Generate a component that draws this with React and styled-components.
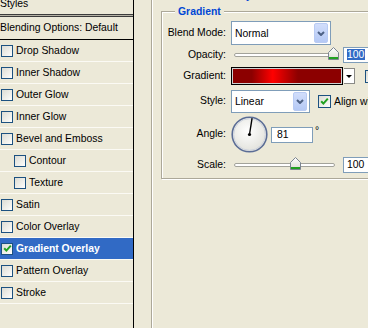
import React from "react";
import styled, { createGlobalStyle } from "styled-components";

const GlobalStyle = createGlobalStyle`
  html, body {
    margin: 0;
    padding: 0;
    background: #ece9d8;
  }
  body {
    font-family: "Liberation Sans", Arial, sans-serif;
    font-size: 10.4px;
    color: #000;
  }
`;

const effects = [
  { name: "Drop Shadow" },
  { name: "Inner Shadow" },
  { name: "Outer Glow" },
  { name: "Inner Glow" },
  { name: "Bevel and Emboss" },
  { name: "Contour", sub: true },
  { name: "Texture", sub: true },
  { name: "Satin" },
  { name: "Color Overlay" },
  { name: "Gradient Overlay", checked: true, selected: true },
  { name: "Pattern Overlay" },
  { name: "Stroke" },
];

function Check({ checked, size = 12 }) {
  return (
    <CheckBox $size={size}>
      {checked && (
        <svg width="9" height="9" viewBox="0 0 9 9">
          <path d="M1.2 4.2 L3.4 6.6 L7.8 1.6" fill="none" stroke="#21a121" strokeWidth="2" />
        </svg>
      )}
    </CheckBox>
  );
}

function Combo({ value, width, height }) {
  return (
    <ComboBox $w={width} $h={height}>
      <span>{value}</span>
      <ComboButton>
        <svg width="8" height="5" viewBox="0 0 8 5">
          <polyline points="1,1 4,4 7,1" fill="none" stroke="#4d6185" strokeWidth="2" />
        </svg>
      </ComboButton>
    </ComboBox>
  );
}

function Slider({ pct }) {
  return (
    <SliderWrap>
      <Track>
        <Thumb style={{ left: `calc(${pct}% - 6px)` }}>
          <svg width="11" height="13" viewBox="0 0 11 13">
            <defs>
              <linearGradient id="tg" x1="0" y1="0" x2="0" y2="1">
                <stop offset="0" stopColor="#ffffff" />
                <stop offset="1" stopColor="#dcdcd4" />
              </linearGradient>
            </defs>
            <path d="M0.5 5.5 L5.5 0.5 L10.5 5.5 L10.5 12.5 L0.5 12.5 Z" fill="url(#tg)" stroke="#7b8591" />
            <rect x="1" y="10" width="9" height="2" fill="#21a121" />
          </svg>
        </Thumb>
      </Track>
    </SliderWrap>
  );
}

function Dial({ angle }) {
  const r = (angle * Math.PI) / 180;
  const x2 = 18.5 + Math.cos(r) * 16.5;
  const y2 = 18.5 - Math.sin(r) * 16.5;
  return (
    <svg width="37" height="37" viewBox="0 0 37 37">
      <defs>
        <radialGradient id="dg" cx="0.45" cy="0.4" r="0.6">
          <stop offset="0" stopColor="#ffffff" />
          <stop offset="1" stopColor="#e2e2dc" />
        </radialGradient>
      </defs>
      <circle cx="18.5" cy="18.5" r="17.3" fill="url(#dg)" stroke="#5b6d96" strokeWidth="1.6" />
      <circle cx="18.5" cy="18.5" r="15.8" fill="none" stroke="#c9cfdc" strokeWidth="0.8" />
      <line x1="18.5" y1="18.5" x2={x2} y2={y2} stroke="#000" strokeWidth="1.4" />
      <circle cx="18.5" cy="18.5" r="1.6" fill="#000" />
    </svg>
  );
}

export default function App() {
  return (
    <>
      <GlobalStyle />
      <Window>
        <StylesPanel>
          <PanelTitle>Styles</PanelTitle>
          <DoubleRule />
          <BlendingRow>Blending Options: Default</BlendingRow>
          {effects.map((e) => (
            <EffectRow key={e.name} $sub={e.sub} $selected={e.selected}>
              <Check checked={e.checked} />
              <span>{e.name}</span>
            </EffectRow>
          ))}
        </StylesPanel>

        <Main>
          <OuterGroup>
            <OuterTitle>Gradient Overlay</OuterTitle>
            <Group>
              <Legend>Gradient</Legend>

              <FieldRow $h={28}>
                <Label>Blend Mode:</Label>
                <Combo value="Normal" width={100} height={24} />
              </FieldRow>

              <FieldRow $h={16}>
                <Label>Opacity:</Label>
                <Slider pct={100} />
                <NumberBox $w={40}>
                  <Selected>100</Selected>
                </NumberBox>
              </FieldRow>

              <FieldRow $h={26}>
                <Label>Gradient:</Label>
                <Swatch />
                <SwatchArrow>
                  <Tri />
                </SwatchArrow>
                <CheckLabel $gap={10}>
                  <Check size={13} />
                  <span>Reverse</span>
                </CheckLabel>
              </FieldRow>

              <FieldRow $h={25}>
                <Label>Style:</Label>
                <Combo value="Linear" width={79} height={23} />
                <CheckLabel $gap={8}>
                  <Check size={13} checked />
                  <span>Align with Layer</span>
                </CheckLabel>
              </FieldRow>

              <FieldRow $h={41}>
                <Label>Angle:</Label>
                <Dial angle={81} />
                <NumberBox $w={42} $gap={3} $pad={5}>
                  81
                </NumberBox>
                <Degree>°</Degree>
              </FieldRow>

              <FieldRow $h={20}>
                <Label>Scale:</Label>
                <Slider pct={62} />
                <NumberBox $w={40}>100</NumberBox>
              </FieldRow>
            </Group>
          </OuterGroup>
        </Main>
      </Window>
    </>
  );
}

const Window = styled.div`
  display: flex;
  width: 368px;
  height: 328px;
  overflow: hidden;
  background: #ece9d8;
`;

const StylesPanel = styled.div`
  width: 133px;
  flex-shrink: 0;
  border-right: 1px solid #000;
  display: flex;
  flex-direction: column;
  overflow: hidden;
  white-space: nowrap;
`;

const PanelTitle = styled.div`
  height: 20px;
  line-height: 20px;
  margin-top: -6px;
  flex-shrink: 0;
`;

const DoubleRule = styled.div`
  height: 1px;
  flex-shrink: 0;
  border-top: 1px solid #3c3c3c;
  border-bottom: 1px solid #3c3c3c;
  background: #b5b2a5;
`;

const BlendingRow = styled.div`
  height: 22px;
  line-height: 22px;
  flex-shrink: 0;
  border-bottom: 1px solid #000;
`;

const EffectRow = styled.div`
  height: 21px;
  flex-shrink: 0;
  display: flex;
  align-items: center;
  gap: 3px;
  padding-left: ${(p) => (p.$sub ? 14 : 1)}px;
  border-bottom: 1px solid #fbfaf4;
  background: ${(p) => (p.$selected ? "#316ac5" : "transparent")};
  color: ${(p) => (p.$selected ? "#fff" : "#000")};
  font-weight: ${(p) => (p.$selected ? "bold" : "normal")};
`;

const CheckBox = styled.span`
  width: ${(p) => p.$size}px;
  height: ${(p) => p.$size}px;
  box-sizing: border-box;
  flex-shrink: 0;
  border: 1px solid #1c5180;
  background: linear-gradient(135deg, #dcdcd4 0%, #f3f3ef 70%, #ffffff 100%);
  display: flex;
  align-items: center;
  justify-content: center;
`;

const Main = styled.div`
  flex: 1;
  display: flex;
  padding-left: 17px;
`;

const OuterGroup = styled.div`
  flex: 1;
  display: flex;
  flex-direction: column;
  align-items: flex-start;
  border-left: 1px solid #aca899;
  box-shadow: inset 1px 0 0 #fff;
`;

const OuterTitle = styled.div`
  height: 13px;
  line-height: 13px;
  margin: -11px 0 3px 16px;
  font-weight: bold;
  color: #0046d5;
  white-space: nowrap;
`;

const Group = styled.fieldset`
  margin: 0 0 0 9px;
  padding: 1px 0 3px 0;
  width: 260px;
  min-width: 0;
  box-sizing: border-box;
  border: 1px solid #aca899;
  box-shadow: inset 1px 1px 0 #fff, 1px 1px 0 #fff;
`;

const Legend = styled.legend`
  margin-left: 13px;
  padding: 0 3px;
  height: 13px;
  line-height: 13px;
  font-weight: bold;
  color: #0046d5;
  background: #ece9d8;
`;

const FieldRow = styled.div`
  display: flex;
  align-items: center;
  height: ${(p) => p.$h}px;
  white-space: nowrap;
`;

const Label = styled.div`
  width: 64px;
  margin-right: 5px;
  padding-bottom: 2px;
  text-align: right;
  flex-shrink: 0;
`;

const ComboBox = styled.div`
  width: ${(p) => p.$w}px;
  height: ${(p) => p.$h}px;
  box-sizing: border-box;
  flex-shrink: 0;
  display: flex;
  align-items: stretch;
  justify-content: space-between;
  padding: 1px 2px 1px 3px;
  border: 1px solid #7f9db9;
  background: #fff;

  span {
    align-self: center;
  }
`;

const ComboButton = styled.div`
  width: 14px;
  box-sizing: border-box;
  display: flex;
  align-items: center;
  justify-content: center;
  border: 1px solid #b9cbf3;
  border-radius: 2px;
  background: linear-gradient(#d2defb, #b5c9f5);
`;

const SliderWrap = styled.div`
  width: 107px;
  height: 16px;
  padding: 0 3px;
  box-sizing: border-box;
  flex-shrink: 0;
  display: flex;
  align-items: center;
`;

const Track = styled.div`
  position: relative;
  flex: 1;
  height: 4px;
  box-sizing: border-box;
  border: 1px solid #a3a39b;
  border-radius: 2px;
  background: #fff;
`;

const Thumb = styled.div`
  position: absolute;
  top: -7px;
  width: 11px;
  height: 13px;
  line-height: 0;
`;

const NumberBox = styled.div`
  width: ${(p) => p.$w}px;
  height: 16px;
  box-sizing: border-box;
  flex-shrink: 0;
  margin-left: ${(p) => p.$gap ?? 5}px;
  padding-left: ${(p) => p.$pad ?? 3}px;
  line-height: 14px;
  border: 1px solid #7f9db9;
  background: #fff;
`;

const Selected = styled.span`
  background: #316ac5;
  color: #fff;
  padding: 0 1px 0 0;
`;

const Swatch = styled.div`
  width: 112px;
  height: 18px;
  box-sizing: border-box;
  flex-shrink: 0;
  border: 1px solid #000;
  box-shadow: inset 0 0 0 1px #cfcfcf;
  background: linear-gradient(
    90deg,
    #8c0000 0%,
    #8c0000 18%,
    #ff0000 37%,
    #8c0000 60%,
    #8c0000 100%
  );
`;

const SwatchArrow = styled.div`
  width: 11px;
  height: 16px;
  box-sizing: border-box;
  flex-shrink: 0;
  margin-left: 1px;
  border: 1px solid #8a8a86;
  border-left: none;
  background: #fff;
  display: flex;
  align-items: center;
  justify-content: center;
`;

const Tri = styled.span`
  width: 0;
  height: 0;
  border-left: 3px solid transparent;
  border-right: 3px solid transparent;
  border-top: 3px solid #000;
`;

const CheckLabel = styled.div`
  display: flex;
  align-items: center;
  gap: 3px;
  margin-left: ${(p) => p.$gap}px;
`;

const Degree = styled.span`
  align-self: flex-start;
  margin: 10px 0 0 2px;
  line-height: 13px;
`;
